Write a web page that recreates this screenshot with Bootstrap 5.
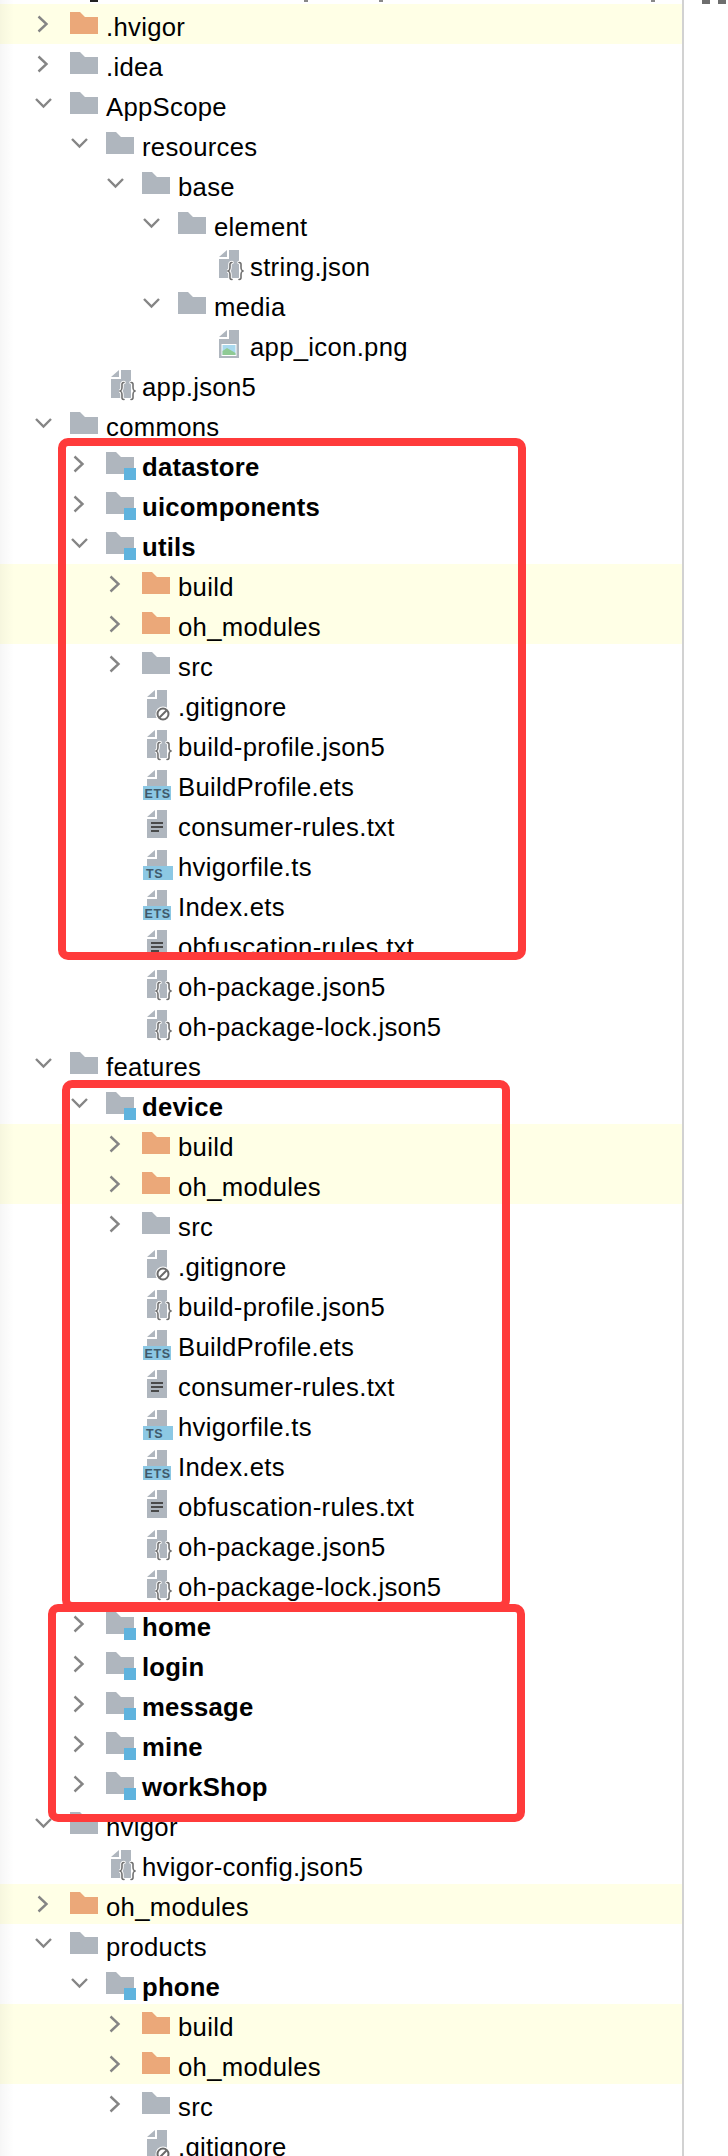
<!DOCTYPE html>
<html lang="en">
<head>
<meta charset="utf-8">
<title>Project tree</title>
<link href="https://cdn.jsdelivr.net/npm/bootstrap@5.3.0/dist/css/bootstrap.min.css" rel="stylesheet">
<style>
html,body{height:2156px;overflow:hidden;background:#fff}
.shot{width:728px;height:2156px;overflow:hidden}
.pane{width:684px;height:2156px;border-right:2px solid #d2d2d2;overflow:hidden;background:#fff}
.pane::before{content:"";position:absolute;left:0;top:0;width:14px;height:100%;z-index:2;pointer-events:none;background:linear-gradient(to right,rgba(0,0,0,.035),rgba(0,0,0,0))}
.topstrip{height:4px;padding-left:90px}
.topstrip i{display:block;height:2px;width:8px;background:#222}
.topstrip i.nx{width:4px;background:#888}
.gap-a{margin-left:206px}.gap-b{margin-left:71px}.gap-c{margin-left:268px}
.sq{width:8px;height:4px;background:#6e6e6e}
.sqs{padding-left:18px;gap:8px;height:4px}
.tree-row{height:40px;font:400 25.7px/46px "Liberation Sans",Arial,sans-serif;letter-spacing:.3px;color:#000;white-space:nowrap}
.tree-row.hl{background:#ffffe6}
.tree-row.md{font-weight:700;letter-spacing:.2px}
.lv0{padding-left:34px}.lv1{padding-left:70px}.lv2{padding-left:106px}.lv3{padding-left:142px}.lv4{padding-left:178px}
.chev,.ico{width:36px;height:40px;flex:0 0 36px;display:block}
.gl-ets{font:700 12.5px "Liberation Sans",Arial,sans-serif;fill:#3f5a6c;letter-spacing:.6px}
.frame{position:absolute;border:8px solid #ff3b3b;border-radius:10px;z-index:3;pointer-events:none}
.fr-a{left:58px;top:438px;width:468px;height:522px}
.fr-b{left:62px;top:1080px;width:448px;height:530px}
.fr-c{left:48px;top:1604px;width:477px;height:218px}
.defs-holder{position:absolute;width:0;height:0}
</style>
</head>
<body>
<svg class="defs-holder" aria-hidden="true">
<defs>
<symbol id="cr" viewBox="0 0 36 40"><path d="M4.5 12.5 12.5 20 4.5 27.5" fill="none" stroke="#858585" stroke-width="2.4"/></symbol>
<symbol id="cd" viewBox="0 0 36 40"><path d="M2 15 9.5 22.5 17 15" fill="none" stroke="#858585" stroke-width="2.4"/></symbol>
<symbol id="fg" viewBox="0 0 36 40"><path d="M0 8H10L15 13H28V30H0Z" fill="#afb6be"/></symbol>
<symbol id="fo" viewBox="0 0 36 40"><path d="M0 8H10L15 13H28V30H0Z" fill="#eba879"/></symbol>
<symbol id="fm" viewBox="0 0 36 40"><path d="M0 8H10L15 13H28V24H18V30H0Z" fill="#afb6be"/><rect x="18" y="24" width="12" height="12" fill="#5fb3de"/></symbol>
<symbol id="pg" viewBox="0 0 36 40"><path d="M5 13 13 6V13ZM15 6H25V34H5V15H15Z" fill="#afb6be"/></symbol>
<symbol id="pj" viewBox="0 0 36 40"><use href="#pg"/><g fill="none" stroke-linecap="round"><path d="M18 18.500C15.500 18.500 16 20 16 23 16 26 15.500 26.500 13.500 27 15.500 27.500 16 28 16 31 16 34 15.500 35.500 18 35.500M25 18.500C27.500 18.500 27 20 27 23 27 26 27.500 26.500 29.500 27 27.500 27.500 27 28 27 31 27 34 27.500 35.500 25 35.500" stroke="#fff" stroke-width="3.500"/><path d="M18 18.500C15.500 18.500 16 20 16 23 16 26 15.500 26.500 13.500 27 15.500 27.500 16 28 16 31 16 34 15.500 35.500 18 35.500M25 18.500C27.500 18.500 27 20 27 23 27 26 27.500 26.500 29.500 27 27.500 27.500 27 28 27 31 27 34 27.500 35.500 25 35.500" stroke="#707070" stroke-width="1.600"/></g></symbol>
<symbol id="pn" viewBox="0 0 36 40"><use href="#pg"/><circle cx="21" cy="30" r="7.500" fill="#fff"/><circle cx="21" cy="30" r="5.500" fill="none" stroke="#6a6a6a" stroke-width="2"/><path d="M17.500 33.500 24.500 26.500" stroke="#6a6a6a" stroke-width="2"/></symbol>
<symbol id="pt" viewBox="0 0 36 40"><use href="#pg"/><path d="M9 18h12v2H9zM9 22h12v2H9zM9 26h8v2H9z" fill="#4a4a4a"/></symbol>
<symbol id="pi" viewBox="0 0 36 40"><use href="#pg"/><rect x="7.500" y="20" width="15" height="12" fill="#fff"/><rect x="8.500" y="21" width="13" height="10" fill="#a9d9ee"/><path d="M8.500 31V27L13 24 21.500 29V31Z" fill="#8fca94"/></symbol>
<symbol id="ps" viewBox="0 0 36 40"><path d="M5 13 13 6V13ZM15 6H25V22H5V15H15Z" fill="#afb6be"/></symbol>
</defs>
</svg>
<div class="shot d-flex">
<div class="pane flex-shrink-0">
<div class="topstrip d-flex"><i></i><i class="nx gap-a"></i><i class="nx gap-b"></i><i class="nx gap-c"></i></div>
<div class="tree-row hl lv0 d-flex"><svg class="chev"><use href="#cr"/></svg><svg class="ico"><use href="#fo"/></svg><span>.hvigor</span></div>
<div class="tree-row lv0 d-flex"><svg class="chev"><use href="#cr"/></svg><svg class="ico"><use href="#fg"/></svg><span>.idea</span></div>
<div class="tree-row lv0 d-flex"><svg class="chev"><use href="#cd"/></svg><svg class="ico"><use href="#fg"/></svg><span>AppScope</span></div>
<div class="tree-row lv1 d-flex"><svg class="chev"><use href="#cd"/></svg><svg class="ico"><use href="#fg"/></svg><span>resources</span></div>
<div class="tree-row lv2 d-flex"><svg class="chev"><use href="#cd"/></svg><svg class="ico"><use href="#fg"/></svg><span>base</span></div>
<div class="tree-row lv3 d-flex"><svg class="chev"><use href="#cd"/></svg><svg class="ico"><use href="#fg"/></svg><span>element</span></div>
<div class="tree-row lv4 d-flex"><div class="chev"></div><svg class="ico"><use href="#pj"/></svg><span>string.json</span></div>
<div class="tree-row lv3 d-flex"><svg class="chev"><use href="#cd"/></svg><svg class="ico"><use href="#fg"/></svg><span>media</span></div>
<div class="tree-row lv4 d-flex"><div class="chev"></div><svg class="ico"><use href="#pi"/></svg><span>app_icon.png</span></div>
<div class="tree-row lv1 d-flex"><div class="chev"></div><svg class="ico"><use href="#pj"/></svg><span>app.json5</span></div>
<div class="tree-row lv0 d-flex"><svg class="chev"><use href="#cd"/></svg><svg class="ico"><use href="#fg"/></svg><span>commons</span></div>
<div class="tree-row md lv1 d-flex"><svg class="chev"><use href="#cr"/></svg><svg class="ico"><use href="#fm"/></svg><span>datastore</span></div>
<div class="tree-row md lv1 d-flex"><svg class="chev"><use href="#cr"/></svg><svg class="ico"><use href="#fm"/></svg><span>uicomponents</span></div>
<div class="tree-row md lv1 d-flex"><svg class="chev"><use href="#cd"/></svg><svg class="ico"><use href="#fm"/></svg><span>utils</span></div>
<div class="tree-row hl lv2 d-flex"><svg class="chev"><use href="#cr"/></svg><svg class="ico"><use href="#fo"/></svg><span>build</span></div>
<div class="tree-row hl lv2 d-flex"><svg class="chev"><use href="#cr"/></svg><svg class="ico"><use href="#fo"/></svg><span>oh_modules</span></div>
<div class="tree-row lv2 d-flex"><svg class="chev"><use href="#cr"/></svg><svg class="ico"><use href="#fg"/></svg><span>src</span></div>
<div class="tree-row lv2 d-flex"><div class="chev"></div><svg class="ico"><use href="#pn"/></svg><span>.gitignore</span></div>
<div class="tree-row lv2 d-flex"><div class="chev"></div><svg class="ico"><use href="#pj"/></svg><span>build-profile.json5</span></div>
<div class="tree-row lv2 d-flex"><div class="chev"></div><svg class="ico"><use href="#ps"/><rect x="1" y="22" width="28" height="14" fill="#8cc8e4"/><text class="gl-ets" x="2.500" y="34">ETS</text></svg><span>BuildProfile.ets</span></div>
<div class="tree-row lv2 d-flex"><div class="chev"></div><svg class="ico"><use href="#pt"/></svg><span>consumer-rules.txt</span></div>
<div class="tree-row lv2 d-flex"><div class="chev"></div><svg class="ico"><use href="#ps"/><rect x="1" y="22" width="30" height="14" fill="#8cc8e4"/><text class="gl-ets" x="4" y="34">TS</text></svg><span>hvigorfile.ts</span></div>
<div class="tree-row lv2 d-flex"><div class="chev"></div><svg class="ico"><use href="#ps"/><rect x="1" y="22" width="28" height="14" fill="#8cc8e4"/><text class="gl-ets" x="2.500" y="34">ETS</text></svg><span>Index.ets</span></div>
<div class="tree-row lv2 d-flex"><div class="chev"></div><svg class="ico"><use href="#pt"/></svg><span>obfuscation-rules.txt</span></div>
<div class="tree-row lv2 d-flex"><div class="chev"></div><svg class="ico"><use href="#pj"/></svg><span>oh-package.json5</span></div>
<div class="tree-row lv2 d-flex"><div class="chev"></div><svg class="ico"><use href="#pj"/></svg><span>oh-package-lock.json5</span></div>
<div class="tree-row lv0 d-flex"><svg class="chev"><use href="#cd"/></svg><svg class="ico"><use href="#fg"/></svg><span>features</span></div>
<div class="tree-row md lv1 d-flex"><svg class="chev"><use href="#cd"/></svg><svg class="ico"><use href="#fm"/></svg><span>device</span></div>
<div class="tree-row hl lv2 d-flex"><svg class="chev"><use href="#cr"/></svg><svg class="ico"><use href="#fo"/></svg><span>build</span></div>
<div class="tree-row hl lv2 d-flex"><svg class="chev"><use href="#cr"/></svg><svg class="ico"><use href="#fo"/></svg><span>oh_modules</span></div>
<div class="tree-row lv2 d-flex"><svg class="chev"><use href="#cr"/></svg><svg class="ico"><use href="#fg"/></svg><span>src</span></div>
<div class="tree-row lv2 d-flex"><div class="chev"></div><svg class="ico"><use href="#pn"/></svg><span>.gitignore</span></div>
<div class="tree-row lv2 d-flex"><div class="chev"></div><svg class="ico"><use href="#pj"/></svg><span>build-profile.json5</span></div>
<div class="tree-row lv2 d-flex"><div class="chev"></div><svg class="ico"><use href="#ps"/><rect x="1" y="22" width="28" height="14" fill="#8cc8e4"/><text class="gl-ets" x="2.500" y="34">ETS</text></svg><span>BuildProfile.ets</span></div>
<div class="tree-row lv2 d-flex"><div class="chev"></div><svg class="ico"><use href="#pt"/></svg><span>consumer-rules.txt</span></div>
<div class="tree-row lv2 d-flex"><div class="chev"></div><svg class="ico"><use href="#ps"/><rect x="1" y="22" width="30" height="14" fill="#8cc8e4"/><text class="gl-ets" x="4" y="34">TS</text></svg><span>hvigorfile.ts</span></div>
<div class="tree-row lv2 d-flex"><div class="chev"></div><svg class="ico"><use href="#ps"/><rect x="1" y="22" width="28" height="14" fill="#8cc8e4"/><text class="gl-ets" x="2.500" y="34">ETS</text></svg><span>Index.ets</span></div>
<div class="tree-row lv2 d-flex"><div class="chev"></div><svg class="ico"><use href="#pt"/></svg><span>obfuscation-rules.txt</span></div>
<div class="tree-row lv2 d-flex"><div class="chev"></div><svg class="ico"><use href="#pj"/></svg><span>oh-package.json5</span></div>
<div class="tree-row lv2 d-flex"><div class="chev"></div><svg class="ico"><use href="#pj"/></svg><span>oh-package-lock.json5</span></div>
<div class="tree-row md lv1 d-flex"><svg class="chev"><use href="#cr"/></svg><svg class="ico"><use href="#fm"/></svg><span>home</span></div>
<div class="tree-row md lv1 d-flex"><svg class="chev"><use href="#cr"/></svg><svg class="ico"><use href="#fm"/></svg><span>login</span></div>
<div class="tree-row md lv1 d-flex"><svg class="chev"><use href="#cr"/></svg><svg class="ico"><use href="#fm"/></svg><span>message</span></div>
<div class="tree-row md lv1 d-flex"><svg class="chev"><use href="#cr"/></svg><svg class="ico"><use href="#fm"/></svg><span>mine</span></div>
<div class="tree-row md lv1 d-flex"><svg class="chev"><use href="#cr"/></svg><svg class="ico"><use href="#fm"/></svg><span>workShop</span></div>
<div class="tree-row lv0 d-flex"><svg class="chev"><use href="#cd"/></svg><svg class="ico"><use href="#fg"/></svg><span>hvigor</span></div>
<div class="tree-row lv1 d-flex"><div class="chev"></div><svg class="ico"><use href="#pj"/></svg><span>hvigor-config.json5</span></div>
<div class="tree-row hl lv0 d-flex"><svg class="chev"><use href="#cr"/></svg><svg class="ico"><use href="#fo"/></svg><span>oh_modules</span></div>
<div class="tree-row lv0 d-flex"><svg class="chev"><use href="#cd"/></svg><svg class="ico"><use href="#fg"/></svg><span>products</span></div>
<div class="tree-row md lv1 d-flex"><svg class="chev"><use href="#cd"/></svg><svg class="ico"><use href="#fm"/></svg><span>phone</span></div>
<div class="tree-row hl lv2 d-flex"><svg class="chev"><use href="#cr"/></svg><svg class="ico"><use href="#fo"/></svg><span>build</span></div>
<div class="tree-row hl lv2 d-flex"><svg class="chev"><use href="#cr"/></svg><svg class="ico"><use href="#fo"/></svg><span>oh_modules</span></div>
<div class="tree-row lv2 d-flex"><svg class="chev"><use href="#cr"/></svg><svg class="ico"><use href="#fg"/></svg><span>src</span></div>
<div class="tree-row lv2 d-flex"><div class="chev"></div><svg class="ico"><use href="#pn"/></svg><span>.gitignore</span></div>
</div>
<div class="sqs d-flex flex-grow-1"><div class="sq"></div><div class="sq"></div></div>
</div>
<div class="frame fr-a"></div>
<div class="frame fr-b"></div>
<div class="frame fr-c"></div>
<script src="https://cdn.jsdelivr.net/npm/bootstrap@5.3.0/dist/js/bootstrap.bundle.min.js"></script>
</body>
</html>
